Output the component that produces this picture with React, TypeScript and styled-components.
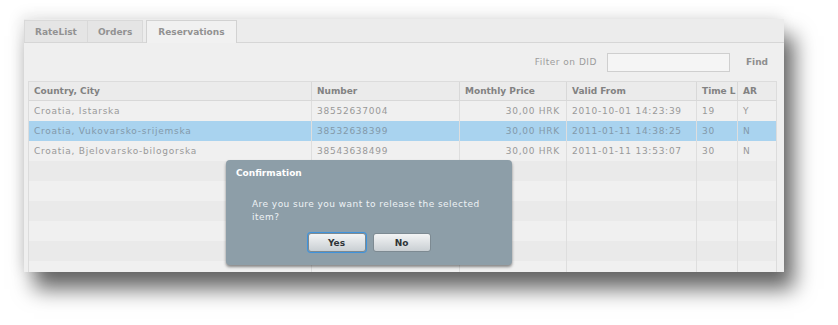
import React from "react";
import styled, { createGlobalStyle, css } from "styled-components";

const GlobalStyle = createGlobalStyle`
  html, body {
    margin: 0;
    padding: 0;
    background: #ffffff;
  }
  * {
    box-sizing: border-box;
  }
`;

const columns = [
  { key: "city", title: "Country, City", width: 283 },
  { key: "number", title: "Number", width: 148 },
  { key: "price", title: "Monthly Price", width: 107, right: true },
  { key: "from", title: "Valid From", width: 130 },
  { key: "time", title: "Time L", width: 41 },
  { key: "ar", title: "AR", width: 40 },
];

const reservations = [
  {
    city: "Croatia, Istarska",
    number: "38552637004",
    price: "30,00 HRK",
    from: "2010-10-01 14:23:39",
    time: "19",
    ar: "Y",
  },
  {
    city: "Croatia, Vukovarsko-srijemska",
    number: "38532638399",
    price: "30,00 HRK",
    from: "2011-01-11 14:38:25",
    time: "30",
    ar: "N",
    selected: true,
  },
  {
    city: "Croatia, Bjelovarsko-bilogorska",
    number: "38543638499",
    price: "30,00 HRK",
    from: "2011-01-11 13:53:07",
    time: "30",
    ar: "N",
  },
];

const tabs = ["RateList", "Orders", "Reservations"];

export default function App() {
  const emptyRows = Array.from({ length: 6 });

  return (
    <>
      <GlobalStyle />
      <Page>
        <Window>
          <TabBar>
            {tabs.map((t) => (
              <Tab key={t} $active={t === "Reservations"}>
                {t}
              </Tab>
            ))}
          </TabBar>

          <Toolbar>
            <FilterLabel>Filter on DID</FilterLabel>
            <FilterInput />
            <FindButton>Find</FindButton>
          </Toolbar>

          <Grid>
            <HeaderRow>
              {columns.map((c) => (
                <HeaderCell key={c.key} $w={c.width}>
                  {c.title}
                </HeaderCell>
              ))}
            </HeaderRow>
            {reservations.map((r, i) => (
              <Row key={r.number} $selected={r.selected} $odd={i % 2 === 1}>
                {columns.map((c) => (
                  <Cell key={c.key} $w={c.width} $right={c.right}>
                    {(r as Record<string, any>)[c.key]}
                  </Cell>
                ))}
              </Row>
            ))}
            {emptyRows.map((_, i) => (
              <Row key={"e" + i} $odd={(i + 3) % 2 === 1}>
                {columns.map((c) => (
                  <Cell key={c.key} $w={c.width} />
                ))}
              </Row>
            ))}
          </Grid>

          <Dialog>
            <DialogTitle>Confirmation</DialogTitle>
            <DialogText>
              Are you sure you want to release the selected item?
            </DialogText>
            <DialogButtons>
              <DialogButton $focused>Yes</DialogButton>
              <DialogButton>No</DialogButton>
            </DialogButtons>
          </Dialog>
        </Window>
      </Page>
    </>
  );
}

const font = css`
  font-family: "DejaVu Sans", Verdana, sans-serif;
  font-size: 9px;
`;

const Page = styled.div`
  width: 838px;
  height: 325px;
  padding: 19px 0 0 24px;
  overflow: hidden;
`;

const Window = styled.div`
  position: relative;
  width: 760px;
  height: 253px;
  background: #efefef;
  overflow: hidden;
  box-shadow: 10px 17px 20px rgba(0, 0, 0, 0.6),
    -3px -3px 14px rgba(0, 0, 0, 0.1);
  ${font};
`;

const TabBar = styled.div`
  height: 24px;
  display: flex;
  align-items: flex-end;
  border-bottom: 1px solid #d6d6d6;
  background: #ececec;
`;

const Tab = styled.div<{ $active?: boolean }>`
  height: 22px;
  padding: 0 10px;
  display: flex;
  align-items: center;
  font-weight: bold;
  color: #929292;
  border: 1px solid #d9d9d9;
  border-bottom: none;
  background: #e5e5e5;
  margin-right: ${(p) => (p.$active ? "0" : "-1px")};
  ${(p) =>
    p.$active &&
    css`
      margin-left: 4px;
      padding: 0 11px;
      background: #f1f1f1;
      height: 23px;
      margin-bottom: -1px;
      border-color: #d2d2d2;
    `}
`;

const Toolbar = styled.div`
  height: 38px;
  display: flex;
  align-items: center;
  justify-content: flex-end;
  padding-right: 16px;
`;

const FilterLabel = styled.span`
  color: #9c9c9c;
  margin-right: 10px;
  letter-spacing: 0.5px;
`;

const FilterInput = styled.div`
  width: 123px;
  height: 19px;
  border: 1px solid #cfcfcf;
  background: #f5f5f5;
  margin-right: 16px;
`;

const FindButton = styled.span`
  font-weight: bold;
  color: #8e8e8e;
`;

const Grid = styled.div`
  margin: 0 7px 0 4px;
  border: 1px solid #dcdcdc;
  border-bottom: none;
`;

const HeaderRow = styled.div`
  display: flex;
  height: 19px;
  background: #ebebeb;
  border-bottom: 1px solid #d8d8d8;
`;

const HeaderCell = styled.div<{ $w: number }>`
  width: ${(p) => p.$w}px;
  flex: none;
  display: flex;
  align-items: center;
  padding: 0 5px;
  font-weight: bold;
  color: #828282;
  border-right: 1px solid #d8d8d8;
  white-space: nowrap;
  overflow: hidden;
  &:last-child {
    border-right: none;
  }
`;

const Row = styled.div<{ $selected?: boolean; $odd?: boolean }>`
  display: flex;
  height: 20px;
  background: ${(p) =>
    p.$selected ? "#a9d3ef" : p.$odd ? "#eaeaea" : "#f0f0f0"};
  color: ${(p) => (p.$selected ? "#8399aa" : "#999999")};
`;

const Cell = styled.div<{ $w: number; $right?: boolean }>`
  width: ${(p) => p.$w}px;
  flex: none;
  display: flex;
  align-items: center;
  justify-content: ${(p) => (p.$right ? "flex-end" : "flex-start")};
  padding: 0 6px 0 5px;
  border-right: 1px solid #dedede;
  white-space: nowrap;
  overflow: hidden;
  letter-spacing: 0.75px;
  &:last-child {
    border-right: none;
  }
`;

const Dialog = styled.div`
  position: absolute;
  left: 202px;
  top: 141px;
  width: 286px;
  height: 105px;
  background: #8d9ea8;
  border-radius: 4px;
  box-shadow: 0 2px 3px rgba(0, 0, 0, 0.45);
  padding: 8px 10px 0 10px;
  display: flex;
  flex-direction: column;
`;

const DialogTitle = styled.div`
  font-weight: bold;
  color: #ffffff;
  height: 12px;
`;

const DialogText = styled.div`
  margin-top: 18px;
  padding: 0 16px;
  color: #eef2f5;
  line-height: 13px;
  letter-spacing: 0.45px;
`;

const DialogButtons = styled.div`
  display: flex;
  justify-content: center;
  gap: 7px;
  margin-top: 9px;
`;

const DialogButton = styled.div<{ $focused?: boolean }>`
  width: 58px;
  height: 19px;
  display: flex;
  align-items: center;
  justify-content: center;
  font-weight: bold;
  color: #2f3438;
  border-radius: 3px;
  background: linear-gradient(#f3f4f5, #c9cfd3);
  border: 1px solid #7d8a92;
  box-shadow: ${(p) =>
    p.$focused ? "0 0 0 1px #3f93dc, 0 0 2px #6ab2f0" : "none"};
`;
